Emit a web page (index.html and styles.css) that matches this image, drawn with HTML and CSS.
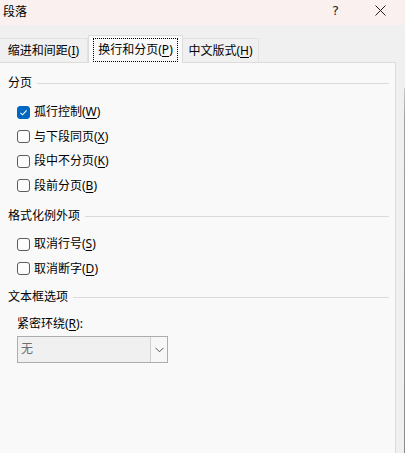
FILE: index.html
```html
<!DOCTYPE html>
<html lang="zh-CN">
<head>
<meta charset="utf-8">
<title>段落</title>
<link rel="stylesheet" href="styles.css">
</head>
<body>
<div class="window">
  <div class="dialog">
    <div class="titlebar">
      <span class="title">段落</span>
      <span class="help">?</span>
      <span class="close">
        <svg width="11" height="11" viewBox="0 0 11 11"><path d="M0.5 0.5 L10.5 10.5 M10.5 0.5 L0.5 10.5" stroke="#1f1f1f" stroke-width="1" fill="none"/></svg>
      </span>
    </div>
    <div class="tabs">
      <div class="tab tab-first">缩进和间距(<u>I</u>)</div>
      <div class="tab tab-active"><span class="focus">换行和分页(<u>P</u>)</span></div>
      <div class="tab tab-third">中文版式(<u>H</u>)</div>
    </div>
    <div class="panel">
      <div class="heading"><span>分页</span><i class="rule"></i></div>
      <div class="group g1">
        <div class="row"><span class="box checked"><svg width="9" height="9" viewBox="0 0 9 9"><path d="M1.5 4.8 L3.6 6.8 L7.6 2.4" stroke="#fff" stroke-width="1.1" fill="none"/></svg></span><span>孤行控制(<u>W</u>)</span></div>
        <div class="row"><span class="box"></span><span>与下段同页(<u>X</u>)</span></div>
        <div class="row"><span class="box"></span><span>段中不分页(<u>K</u>)</span></div>
        <div class="row"><span class="box"></span><span>段前分页(<u>B</u>)</span></div>
      </div>
      <div class="heading h2"><span>格式化例外项</span><i class="rule"></i></div>
      <div class="group g2">
        <div class="row"><span class="box"></span><span>取消行号(<u>S</u>)</span></div>
        <div class="row"><span class="box"></span><span>取消断字(<u>D</u>)</span></div>
      </div>
      <div class="heading h3"><span>文本框选项</span><i class="rule"></i></div>
      <div class="label">紧密环绕(<u>R</u>):</div>
      <div class="select">
        <span class="value">无</span>
        <span class="arrow"><svg width="9" height="6" viewBox="0 0 9 6"><path d="M0.5 0.8 L4.5 4.8 L8.5 0.8" stroke="#555" stroke-width="1" fill="none"/></svg></span>
      </div>
    </div>
  </div>
  <div class="edge"></div>
</div>
</body>
</html>
```
FILE: styles.css
```css
html, body {
  margin: 0;
  padding: 0;
}
body {
  width: 405px;
  height: 453px;
  overflow: hidden;
  background: #f0f0f0;
  font-family: "Noto Sans", "Noto Sans CJK SC", sans-serif;
  font-size: 12px;
  color: #000;
}
u {
  text-decoration: underline;
  text-underline-offset: 2px;
}
.window {
  display: flex;
  height: 453px;
}
.dialog {
  width: 404px;
  display: flex;
  flex-direction: column;
}
.edge {
  width: 1px;
  margin-top: 88px;
  background: linear-gradient(#c8c8c8 0, #a0a0a0 30px, #8a8a8a 100%);
}
.titlebar {
  height: 25px;
  background: #f9f0ef;
  display: flex;
  align-items: center;
}
.title {
  padding-left: 3px;
  line-height: 16px;
  margin-top: -1px;
  flex: 1;
}
.help {
  font-family: "DejaVu Sans", sans-serif;
  font-size: 13px;
  color: #1f1f1f;
  margin-right: 36px;
  margin-top: -5px;
}
.close {
  display: flex;
  margin-right: 18px;
  margin-top: -5px;
}
.tabs {
  height: 37px;
  display: flex;
  align-items: flex-end;
  position: relative;
  z-index: 1;
}
.tab {
  height: 24px;
  box-sizing: border-box;
  border: 1px solid #e2e2e2;
  border-bottom: none;
  display: flex;
  align-items: center;
  justify-content: center;
  line-height: 16px;
  background: #f0f0f0;
}
.tab-first {
  width: 88px;
  border-left: none;
  padding-top: 1px;
}
.tab-third {
  width: 76px;
  border-left: none;
  padding-top: 1px;
}
.tab-active {
  width: 95px;
  height: 28px;
  margin-bottom: -1px;
  background: #f9f9f9;
  border-color: #dcdcdc;
  padding-bottom: 1px;
}
.focus {
  outline: 1px dotted #000;
  padding: 3px 4px;
  margin-top: 1px;
}
.panel {
  flex: 1;
  width: 396px;
  box-sizing: border-box;
  background: #f9f9f9;
  border: 1px solid #dcdcdc;
  border-left: none;
  border-bottom: none;
  padding: 12px 6px 0 8px;
}
.heading {
  height: 16px;
  line-height: 16px;
  display: flex;
  align-items: center;
  gap: 5px;
}
.rule {
  flex: 1;
  height: 1px;
  background: #dadada;
}
.h2 {
  margin-top: 10px;
}
.h3 {
  margin-top: 8px;
}
.group {
  display: flex;
  flex-direction: column;
  padding-left: 9px;
}
.g1 {
  margin-top: 9px;
}
.g2 {
  margin-top: 8px;
}
.row {
  height: 24.5px;
  display: flex;
  align-items: center;
  gap: 4px;
  line-height: 16px;
}
.box {
  width: 13px;
  height: 13px;
  box-sizing: border-box;
  border: 1px solid #5c5c5c;
  border-radius: 3px;
  background: #fdfdfd;
  display: flex;
  align-items: center;
  justify-content: center;
}
.box.checked {
  background: #0067c0;
  border-color: #0067c0;
}
.label {
  margin-top: 11px;
  padding-left: 9px;
  line-height: 16px;
}
.select {
  margin-top: 4px;
  margin-left: 9px;
  width: 151px;
  height: 27px;
  box-sizing: border-box;
  border: 1px solid #adadad;
  background: #f0f0f0;
  display: flex;
}
.value {
  flex: 1;
  padding-left: 3px;
  line-height: 24px;
  color: #6d6d6d;
}
.arrow {
  width: 16px;
  border-left: 1px solid #d0d0d0;
  background: #f7f7f7;
  display: flex;
  align-items: center;
  justify-content: center;
}
```
